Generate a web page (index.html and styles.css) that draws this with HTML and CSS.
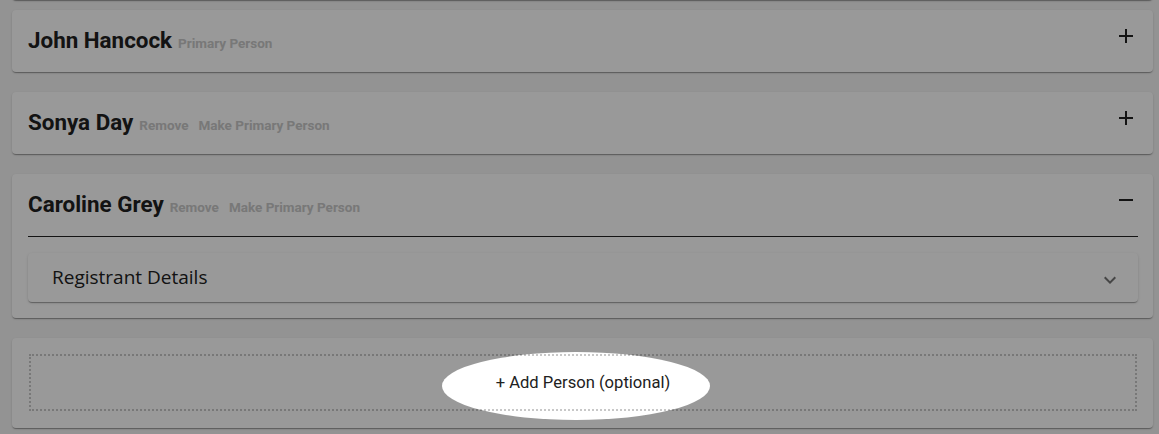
FILE: index.html
```html
<!DOCTYPE html>
<html lang="en">
<head>
<meta charset="utf-8">
<title>People</title>
<link rel="stylesheet" href="styles.css">
</head>
<body>
<main class="page">
  <div class="card stub"></div>

  <section class="card person">
    <header class="person-head">
      <h2 class="name">John Hancock</h2>
      <span class="tag">Primary Person</span>
      <svg class="toggle" viewBox="0 0 14 14" aria-hidden="true"><path d="M0 7h14M7 0v14" /></svg>
    </header>
  </section>

  <section class="card person">
    <header class="person-head">
      <h2 class="name">Sonya Day</h2>
      <span class="tag">Remove</span>
      <span class="tag">Make Primary Person</span>
      <svg class="toggle" viewBox="0 0 14 14" aria-hidden="true"><path d="M0 7h14M7 0v14" /></svg>
    </header>
  </section>

  <section class="card person open">
    <header class="person-head">
      <h2 class="name">Caroline Grey</h2>
      <span class="tag">Remove</span>
      <span class="tag">Make Primary Person</span>
      <svg class="toggle" viewBox="0 0 14 14" aria-hidden="true"><path d="M0 7h14" /></svg>
    </header>
    <div class="person-body">
      <div class="sub-card">
        <span class="sub-title">Registrant Details</span>
        <svg class="chevron" viewBox="0 0 24 24" aria-hidden="true"><path d="M7.41 8.59 12 13.17l4.59-4.58L18 10l-6 6-6-6z"/></svg>
      </div>
    </div>
  </section>

  <section class="card add">
    <button class="add-btn" type="button">
      <span class="spot"></span>
      + Add Person (optional)
    </button>
  </section>
</main>
</body>
</html>
```

FILE: styles.css
```css
html, body {
  margin: 0;
  padding: 0;
}

body {
  background: #f6f6f6;
  font-family: Roboto, "Liberation Sans", sans-serif;
  color: #212121;
  overflow: hidden;
  height: 434px;
}

.page {
  display: flex;
  flex-direction: column;
  gap: 20px;
  padding: 0 6px 0 12px;
}

.card {
  background: #fff;
  border-radius: 4px;
  box-shadow: 0 2px 1px -1px rgba(0,0,0,.2), 0 1px 1px 0 rgba(0,0,0,.14), 0 1px 3px 0 rgba(0,0,0,.12);
}

.stub {
  height: 8px;
  margin-top: -8px;
  margin-bottom: -10px;
}

.person-head {
  display: flex;
  align-items: baseline;
  height: 62px;
  padding: 0 20px 0 16px;
  box-sizing: border-box;
}

.name {
  margin: 0 6px 0 0;
  padding-top: 17px;
  font-size: 22.4px;
  font-weight: 700;
  color: #212121;
  line-height: 26px;
}

.tag {
  font-size: 13.5px;
  font-weight: 700;
  color: #c8c8c8;
  margin-right: 10px;
}

.toggle {
  width: 14px;
  height: 14px;
  margin-left: auto;
  align-self: flex-start;
  margin-top: 19px;
  stroke: #212121;
  stroke-width: 2;
  fill: none;
}

.person-body {
  padding: 0 15px 16px 16px;
}

.open .person-head + .person-body::before {
  content: "";
  display: block;
  height: 1px;
  background: #222;
  margin-bottom: 16px;
}

.sub-card {
  display: flex;
  align-items: center;
  height: 49px;
  padding: 0 16px 0 24px;
  background: #fff;
  border-radius: 4px;
  box-shadow: 0 2px 1px -1px rgba(0,0,0,.2), 0 1px 1px 0 rgba(0,0,0,.14), 0 1px 3px 0 rgba(0,0,0,.12);
}

.sub-title {
  font-family: "Open Sans", "Noto Sans", sans-serif;
  font-size: 19px;
  color: #212121;
  padding-bottom: 1px;
}

.chevron {
  width: 24px;
  height: 24px;
  margin-left: auto;
  margin-top: 5px;
  fill: #767676;
}

.add {
  padding: 16px 16px 17px 17px;
}

.add-btn {
  position: relative;
  display: flex;
  align-items: center;
  justify-content: center;
  width: 100%;
  height: 57px;
  box-sizing: border-box;
  background: transparent;
  border: 2px dotted #c8c8c8;
  font-family: Roboto, "Liberation Sans", sans-serif;
  font-size: 16.6px;
  color: #212121;
  padding: 0;
  cursor: pointer;
}

.spot {
  position: absolute;
  left: calc(50% - 141px);
  top: calc(50% - 31px);
  width: 268px;
  height: 68px;
  border-radius: 50%;
  box-shadow: 0 0 0 3000px rgba(0,0,0,.4);
  pointer-events: none;
  z-index: 10;
}
```
